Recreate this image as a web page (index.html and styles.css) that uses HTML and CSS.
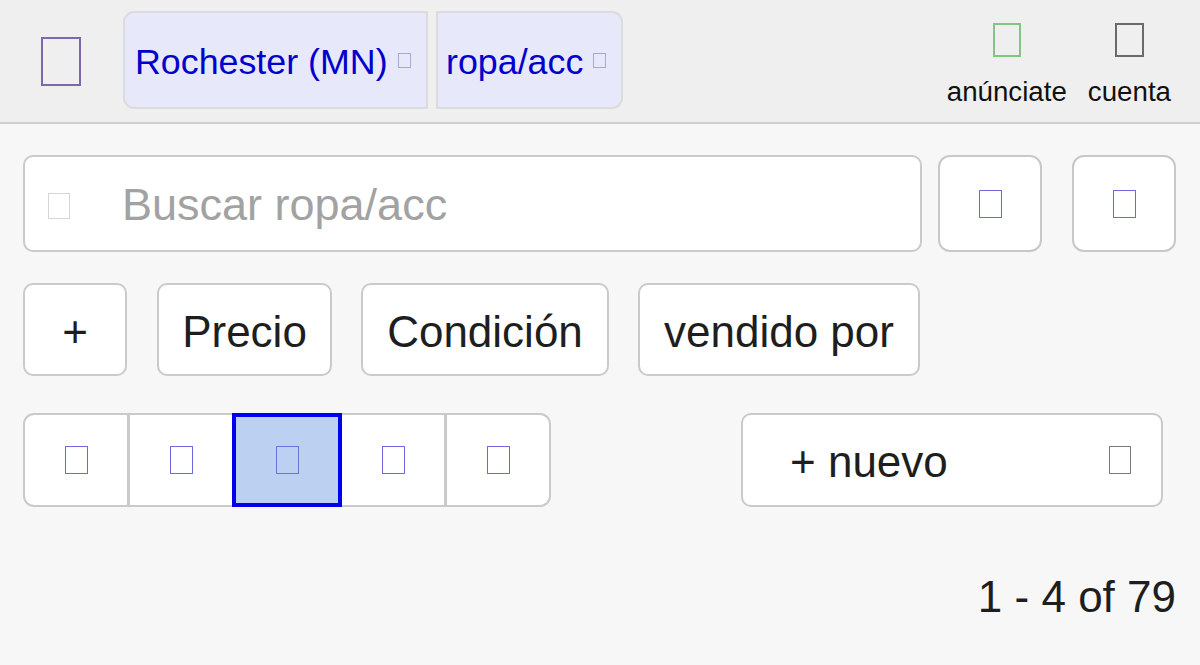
FILE: index.html
```html
<!DOCTYPE html>
<html lang="es">
<head>
<meta charset="utf-8">
<title>ropa/acc - Rochester (MN)</title>
<link rel="stylesheet" href="styles.css">
</head>
<body>
<header class="hdr">
  <a class="logo"><span class="tofu tofu-logo"></span></a>
  <nav class="crumbs">
    <a class="crumb crumb-first">Rochester (MN) <span class="tofu tofu-crumb"></span></a>
    <a class="crumb crumb-last">ropa/acc <span class="tofu tofu-crumb"></span></a>
  </nav>
  <div class="hdr-links">
    <a class="hlink"><span class="tofu tofu-green"></span><span class="hlink-text">anúnciate</span></a>
    <a class="hlink"><span class="tofu tofu-grey"></span><span class="hlink-text">cuenta</span></a>
  </div>
</header>
<main class="main">
  <div class="search-row">
    <label class="search">
      <span class="tofu tofu-search"></span>
      <span class="search-ph">Buscar ropa/acc</span>
    </label>
    <button class="icon-btn"><span class="tofu tofu-blue"></span></button>
    <button class="icon-btn icon-btn-2"><span class="tofu tofu-blue"></span></button>
  </div>
  <div class="filter-row">
    <button class="fbtn fbtn-plus">+</button>
    <button class="fbtn fbtn-precio">Precio</button>
    <button class="fbtn fbtn-cond">Condición</button>
    <button class="fbtn fbtn-vend">vendido por</button>
  </div>
  <div class="view-row">
    <div class="segs">
      <button class="seg seg-first"><span class="tofu tofu-blue"></span></button>
      <button class="seg"><span class="tofu tofu-blue"></span></button>
      <button class="seg seg-on"><span class="tofu tofu-blue"></span></button>
      <button class="seg seg-after-on"><span class="tofu tofu-blue"></span></button>
      <button class="seg seg-last"><span class="tofu tofu-blue"></span></button>
    </div>
    <button class="nuevo"><span>+ nuevo</span><span class="tofu tofu-nuevo"></span></button>
  </div>
  <div class="count">1 - 4 of 79</div>
</main>
</body>
</html>
```
FILE: styles.css
```css
* { box-sizing: border-box; }
html, body { margin: 0; padding: 0; }
body {
  background: #f7f7f7;
  font-family: "Liberation Sans", Arial, Helvetica, sans-serif;
  color: #222;
}
button {
  font-family: inherit;
  color: inherit;
  margin: 0;
  cursor: pointer;
}
.tofu {
  display: inline-block;
  flex: none;
}

/* header */
.hdr {
  display: flex;
  align-items: center;
  height: 124px;
  background: #efefef;
  border-bottom: 2px solid #cfcfcf;
  padding: 0 29px 0 41px;
}
.logo { display: flex; }
.tofu-logo {
  width: 40px;
  height: 49px;
  border: 2px solid #7e68ab;
}
.crumbs {
  display: flex;
  gap: 8px;
  margin-left: 42px;
  height: 98px;
  margin-top: -2px;
}
.crumb {
  display: flex;
  align-items: center;
  gap: 10px;
  padding: 5px 13px 0 10px;
  background: #e8e8fb;
  border: 2px solid #dcdcdc;
  color: #0000cc;
  font-size: 35.8px;
  text-decoration: none;
}
.crumb-first { border-radius: 11px 0 0 11px; width: 305px; }
.crumb-last { border-radius: 0 11px 11px 0; width: 187px; padding-left: 8px; }
.tofu-crumb {
  width: 13px;
  height: 15px;
  border: 1px solid #a9a9cf;
  margin-top: -4px;
}
.hdr-links {
  margin-left: auto;
  align-self: stretch;
  display: flex;
  gap: 21px;
  padding-top: 23px;
}
.hlink {
  display: flex;
  flex-direction: column;
  align-items: center;
  gap: 19px;
  color: #111;
  text-decoration: none;
}
.hlink-text { font-size: 27.7px; line-height: 32px; }
.tofu-green { width: 28px; height: 34px; border: 2px solid #80c880; }
.tofu-grey { width: 29px; height: 34px; border: 2px solid #6a6a6a; }

/* main */
.main { padding: 31px 24px 0 23px; }
.search-row {
  display: flex;
  height: 97px;
}
.search {
  flex: 1;
  display: flex;
  align-items: center;
  background: #fff;
  border: 2px solid #cacaca;
  border-radius: 10px;
  padding-left: 23px;
  gap: 52px;
}
.tofu-search { width: 22px; height: 26px; border: 1.5px solid #d6d6d6; margin-top: 4px; }
.search-ph {
  font-size: 45px;
  color: #a2a2a2;
  padding-top: 2px;
}
.icon-btn {
  width: 104px;
  margin-left: 16px;
  background: #fff;
  border: 2px solid #c8c8c8;
  border-radius: 12px;
  display: flex;
  align-items: center;
  justify-content: center;
  padding: 0;
}
.icon-btn-2 { margin-left: 30px; }
.tofu-blue { width: 23px; height: 28px; border: 1.5px solid #6b6bdc; }

.filter-row {
  display: flex;
  gap: 29px;
  margin-top: 31px;
  height: 93px;
}
.fbtn {
  background: #fff;
  border: 2px solid #cacaca;
  border-radius: 10px;
  padding: 4px 0 0;
  font-size: 44px;
  color: #1e1e1e;
  text-align: center;
}
.fbtn-plus { width: 104px; margin-right: 1px; }
.fbtn-precio { width: 175px; }
.fbtn-cond { width: 248px; }
.fbtn-vend { width: 282px; }

.view-row {
  display: flex;
  justify-content: space-between;
  align-items: stretch;
  margin-top: 37px;
  height: 94px;
}
.segs {
  display: flex;
  width: 528px;
}
.seg {
  flex: 1 1 0;
  display: flex;
  align-items: center;
  justify-content: center;
  background: #fff;
  border: 0;
  border-top: 2px solid #cacaca;
  border-bottom: 2px solid #cacaca;
  border-left: 3px solid #cacaca;
  padding: 0;
}
.seg-first { border-left: 2px solid #cacaca; border-radius: 11px 0 0 11px; }
.seg-last { border-right: 2px solid #cacaca; border-radius: 0 11px 11px 0; }
.seg-after-on { border-left: 0; }
.seg-on {
  background: #bcd0f1;
  border: 4px solid #0000ee;
}
.seg-on .tofu-blue { border-color: #7070d8; }
.nuevo {
  width: 422px;
  margin-right: 13px;
  display: flex;
  align-items: center;
  justify-content: space-between;
  background: #fff;
  border: 2px solid #cacaca;
  border-radius: 10px;
  padding: 4px 30px 0 47px;
  font-size: 44px;
  color: #1e1e1e;
}
.tofu-nuevo { width: 22px; height: 28px; border: 1.5px solid #7a7a7a; margin-top: -4px; }

.count {
  margin-top: 65px;
  text-align: right;
  font-size: 44px;
  line-height: 50px;
  color: #1e1e1e;
}
```
